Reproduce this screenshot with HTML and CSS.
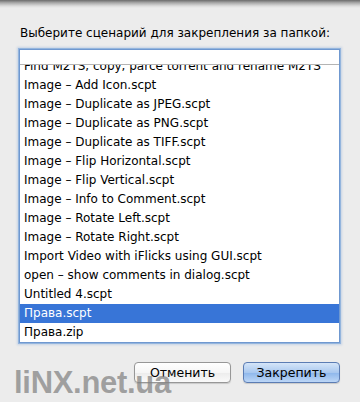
FILE: index.html
```html
<!DOCTYPE html>
<html lang="ru">
<head>
    <meta charset="UTF-8">
    <meta name="viewport" content="width=device-width, initial-scale=1.0">
    <title>Закрепить сценарий</title>
    <link rel="stylesheet" href="styles.css">
</head>
<body>
    <div class="sheet-shadow"></div>

    <div class="dialog">
        <p class="prompt">Выберите сценарий для закрепления за папкой:</p>

        <div class="list">
            <div class="list-header"></div>
            <div class="list-body">
                <div class="row row-clipped">Find M2TS, copy, parce torrent and rename M2TS</div>
                <div class="row">Image – Add Icon.scpt</div>
                <div class="row">Image – Duplicate as JPEG.scpt</div>
                <div class="row">Image – Duplicate as PNG.scpt</div>
                <div class="row">Image – Duplicate as TIFF.scpt</div>
                <div class="row">Image – Flip Horizontal.scpt</div>
                <div class="row">Image – Flip Vertical.scpt</div>
                <div class="row">Image – Info to Comment.scpt</div>
                <div class="row">Image – Rotate Left.scpt</div>
                <div class="row">Image – Rotate Right.scpt</div>
                <div class="row">Import Video with iFlicks using GUI.scpt</div>
                <div class="row">open – show comments in dialog.scpt</div>
                <div class="row">Untitled 4.scpt</div>
                <div class="row selected">Права.scpt</div>
                <div class="row">Права.zip</div>
            </div>
        </div>

        <div class="actions">
            <button class="btn">Отменить</button>
            <button class="btn btn-default">Закрепить</button>
        </div>
    </div>

    <div class="watermark">liNX.net.ua</div>
</body>
</html>
```

FILE: styles.css
```css
:root {
    --window-bg: #ececec;
    --focus-ring: #7ea6da;
    --select-color: #3875d7;
    --text-color: #000;
}

body {
    margin: 0;
    width: 360px;
    height: 402px;
    overflow: hidden;
    background-color: var(--window-bg);
    font-family: "DejaVu Sans", "Liberation Sans", sans-serif;
    font-size: 12px;
    color: var(--text-color);
    position: relative;
}

.sheet-shadow {
    height: 8px;
    background: linear-gradient(to bottom, #6b6b6b 0%, #a9a9a9 35%, #dcdcdc 75%, #ececec 100%);
}

.dialog {
    padding: 0 20px 0 19px;
}

.prompt {
    margin: 0;
    padding: 18px 0 0 1px;
    height: 23px;
    line-height: 14px;
    font-size: 12px;
    white-space: nowrap;
}

.list {
    background-color: #fff;
    border: 1px solid #6f98d0;
    box-shadow: 0 0 0 1px rgba(126, 166, 218, 0.7), 0 0 2px 2px rgba(126, 166, 218, 0.35);
}

.list-header {
    height: 14px;
    border-bottom: 1px solid #b4b4b4;
}

.list-body {
    height: 277px;
    overflow: hidden;
}

.row {
    height: 19px;
    line-height: 19px;
    padding-left: 4px;
    white-space: nowrap;
}

.row-clipped {
    margin-top: -8px;
}

.row.selected {
    background-color: var(--select-color);
    color: #fff;
}

.actions {
    display: flex;
    justify-content: flex-end;
    gap: 12px;
    margin-top: 19px;
}

.btn {
    width: 97px;
    height: 21px;
    padding: 0;
    border: 1px solid #979797;
    border-radius: 4px;
    background: linear-gradient(to bottom, #ffffff 0%, #f6f6f6 50%, #ececec 51%, #fafafa 100%);
    font-family: "DejaVu Sans", "Liberation Sans", sans-serif;
    font-size: 12.5px;
    color: #000;
    box-shadow: 0 1px 1px rgba(0, 0, 0, 0.15);
}

.btn-default {
    border-color: #5b7cb3;
    background: linear-gradient(to bottom, #d5e5f8 0%, #a9c8ef 50%, #8db6eb 51%, #bcd6f6 100%);
}

.watermark {
    position: absolute;
    left: 14px;
    top: 365px;
    font-family: "Liberation Sans", sans-serif;
    font-weight: bold;
    font-size: 31px;
    letter-spacing: -0.3px;
    color: rgba(130, 130, 130, 0.72);
}
```
